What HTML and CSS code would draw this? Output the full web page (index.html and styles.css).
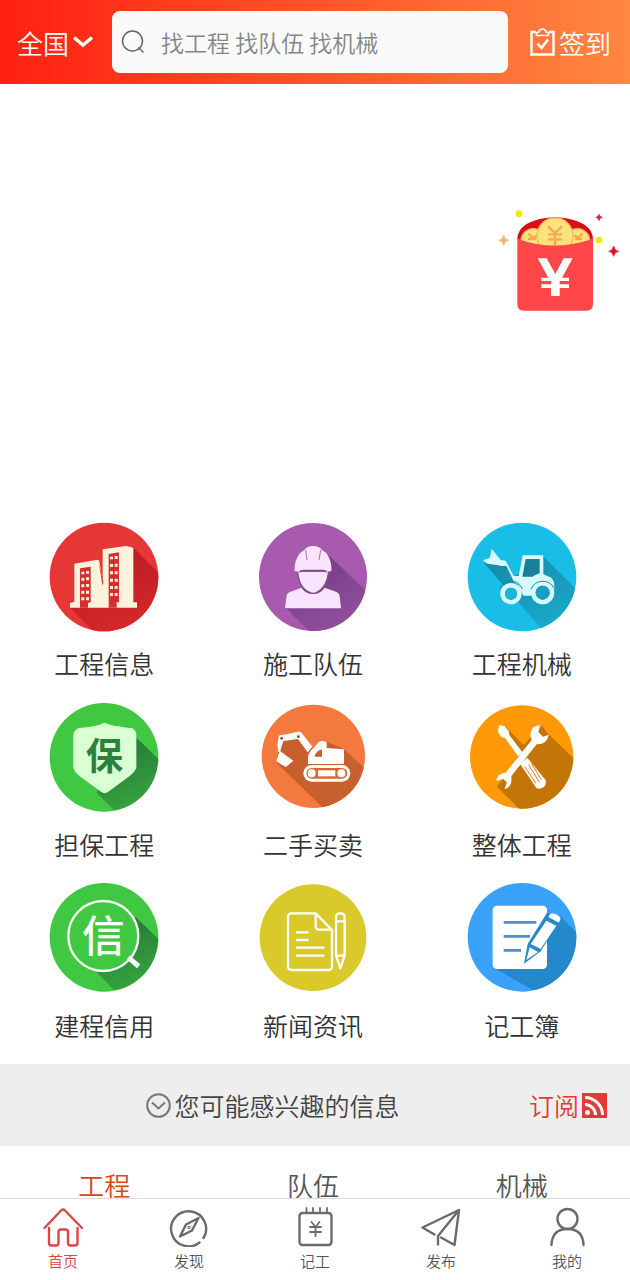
FILE: index.html
```html
<!DOCTYPE html>
<html lang="zh-CN">
<head>
<meta charset="utf-8">
<meta name="viewport" content="width=device-width, initial-scale=1">
<title>首页</title>
<link rel="stylesheet" href="styles.css">
</head>
<body>
<header class="topbar">
  <button class="topbar-button" type="button">全国
    <svg class="chevron" viewBox="0 0 20 12" aria-hidden="true"><path d="M1 1.500 10 9 19 1.500" fill="none" stroke="#fff" stroke-width="3.500"/></svg>
  </button>
  <label class="search">
    <svg class="search-icon" viewBox="0 0 24 24" fill="none" stroke="#666" stroke-width="1.500" aria-hidden="true"><circle cx="11.500" cy="11" r="10"/><path d="M17.500 17.500 22.500 22.500"/></svg>
    <input class="search-input" type="text" placeholder="找工程 找队伍 找机械" aria-label="搜索">
  </label>
  <button class="topbar-button checkin" type="button">
    <svg class="checkin-icon" viewBox="0 0 25 28" fill="none" stroke="#fff" aria-hidden="true"><path d="M6 4H1.500V26.500H23.500V4H19" stroke-width="2.400"/><path d="M6.500 7.500V5.500Q6.500 4 9 4Q9.500 1 12.500 1T16 4Q18.500 4 18.500 5.500V7.500Z" stroke-width="1.600"/><path d="M7.500 15.500 11.500 20 18 11.500" stroke-width="2.600"/></svg>签到
  </button>
</header>

<main>
  <section class="banner" aria-label="活动"></section>

  <nav class="services" aria-label="服务">
    <a class="service" href="#info">
      <svg class="service-icon" viewBox="30 21 324 324" aria-hidden="true">
        <defs><clipPath id="c1"><circle cx="192" cy="186" r="163"/></clipPath><linearGradient id="g1" x1="0" y1="0" x2="0.300" y2="1"><stop offset="0" stop-color="#b51b20"/><stop offset="1" stop-color="#d8292c"/></linearGradient></defs>
        <circle cx="192" cy="186" r="163" fill="#e73636"/>
        <path d="M279 97 400 218V400H210L90 278Z" fill="url(#g1)" clip-path="url(#c1)"/>
        <path d="M90 278V264L103 260V146L172 134L178 137L188 202V103L258 93L280 98V262H291V278Z" fill="#fff2dc"/>
        <path d="M120 160 152 155V262L144 264V278H120ZM206 117 237 112V262H230V278H206ZM176 140 190 200 188 214Z" fill="#d52e31"/>
        <path d="M124 170H133V178H124ZM138 168H147V176H138ZM124 188H133V197H124ZM138 187H147V196H138ZM124 208H133V217H124ZM138 207H147V216H138ZM124 227H133V236H124ZM138 227H147V236H138ZM124 247H133V256H124ZM138 247H147V256H138ZM210 125H219V133H210ZM224 123H233V132H224ZM210 147H219V156H210ZM224 146H233V155H224ZM210 169H219V178H210ZM224 169H233V178H224ZM210 191H219V200H210ZM224 191H233V200H224ZM210 213H219V222H210ZM224 213H233V222H224ZM210 234H219V243H210ZM224 234H233V243H224Z" fill="#fff2dc"/>
      </svg>
      <span class="service-name">工程信息</span>
    </a>
    <a class="service" href="#teams">
      <svg class="service-icon" viewBox="27 21 324 324" aria-hidden="true">
        <defs><clipPath id="c2"><circle cx="189" cy="186" r="162"/></clipPath><linearGradient id="g2" x1="0.200" y1="0" x2="0.700" y2="1"><stop offset="0" stop-color="#713b82"/><stop offset="1" stop-color="#9b54a5"/></linearGradient></defs>
        <circle cx="189" cy="186" r="162" fill="#a85aae"/>
        <path d="M232 117 380 258V400H230L108 280Z" fill="url(#g2)" clip-path="url(#c2)"/>
        <path d="M105 280 110 241Q113 232 122 230L154 218Q168 237 189 237Q211 237 224 218L258 230Q267 233 269 242L273 280Z" fill="#f8e5fd"/>
        <path d="M143 168Q145 218 180 233Q189 237 199 233Q232 217 236 168Z" fill="#f8e5fd" stroke="#7d4b88" stroke-width="4"/>
        <path d="M134 168V154Q139 117 163 105Q170 93 189 93Q208 93 216 105Q240 117 244 154V168L229 171L217 166H161L149 171Z" fill="#f8e5fd"/>
        <path d="M148 170 160 167H218L230 170" fill="none" stroke="#7d4b88" stroke-width="5"/>
        <path d="M167 105 171 135M212 105 207 135" stroke="#a278ad" stroke-width="3"/>
      </svg>
      <span class="service-name">施工队伍</span>
    </a>
    <a class="service" href="#machines">
      <svg class="service-icon" viewBox="38 21 324 324" aria-hidden="true">
        <defs><clipPath id="c3"><circle cx="200" cy="186" r="163"/></clipPath><linearGradient id="g3" x1="0.200" y1="0" x2="0.700" y2="1"><stop offset="0" stop-color="#1989a8"/><stop offset="1" stop-color="#19b4d5"/></linearGradient></defs>
        <circle cx="200" cy="186" r="163" fill="#18bee5"/>
        <path d="M262 122 420 280V400H310L85 143L150 150L171 190Z" fill="url(#g3)" clip-path="url(#c3)"/>
        <path d="M83 136 104 128 109 101 136 135 151 137 175 183H190L202 121H264V178L288 188Q298 198 297 220L294 235H230L226 242H204L190 210L176 201L154 153H139L129 151L96 146Z" fill="#d7fbfc"/>
        <path d="M211 132H253V175L240 180 231 185H201Z" fill="#197f9b"/>
        <g fill="#197f9b" stroke="#d7fbfc"><circle cx="167" cy="236" r="25" stroke-width="14"/><circle cx="262" cy="233" r="28" stroke-width="14"/></g>
        <g fill="none" stroke="#178ead" stroke-width="3"><path d="M133 222A36 36 0 0 1 201 222M227 223A38 38 0 0 1 296 219"/></g>
        <circle cx="167" cy="236" r="18" fill="#18b4d9"/><circle cx="262" cy="233" r="21" fill="#159fc1"/>
      </svg>
      <span class="service-name">工程机械</span>
    </a>
    <a class="service" href="#guarantee">
      <svg class="service-icon" viewBox="30 24 324 324" aria-hidden="true">
        <defs><clipPath id="c4"><circle cx="192" cy="187" r="163"/></clipPath><linearGradient id="g4" x1="0.300" y1="0.200" x2="0.600" y2="1"><stop offset="0" stop-color="#2b803b"/><stop offset="1" stop-color="#39b43e"/></linearGradient></defs>
        <circle cx="192" cy="187" r="163" fill="#41c842"/>
        <path d="M288 127 400 235V400H275L170 293Z" fill="url(#g4)" clip-path="url(#c4)"/>
        <path d="M194 83Q210 92 278 100Q289 108 289 120V218Q285 230 268 244L204 291Q194 298 184 291L122 246Q105 233 100 218V120Q101 105 116 99Q171 94 194 83Z" fill="#daffd3"/>
        <text class="icon-text" x="193" y="225" font-size="112" font-weight="700" text-anchor="middle" fill="#2c803c">保</text>
      </svg>
      <span class="service-name">担保工程</span>
    </a>
    <a class="service" href="#used">
      <svg class="service-icon" viewBox="657 24 324 324" aria-hidden="true">
        <defs><clipPath id="c5"><circle cx="820" cy="184" r="155"/></clipPath></defs>
        <circle cx="820" cy="184" r="155" fill="#f4793e"/>
        <path d="M720 125 777 113 818 160 862 140 912 163 1010 252V400H913L710 204Z" fill="#c75f2e" clip-path="url(#c5)"/>
        <g fill="#fff"><path d="M715 170 712 150 716 125Q719 118 727 120L774 110Q780 109 785 114L817 155L803 172L774 132L730 138L720 170Z"/><path d="M719 167 760 197 738 216Q720 207 709 199Z"/><path d="M804 207V185Q808 166 822 158L836 141Q848 134 860 142V159L912 163V207Z"/></g>
        <path d="M824 185Q828 167 846 163V185Z" fill="#c75f2e"/>
        <rect x="790" y="210" width="141" height="50" rx="25" fill="#fff"/><rect x="799" y="219" width="123" height="32" rx="16" fill="#d96731"/>
        <g fill="#fff"><circle cx="815" cy="235" r="12"/><circle cx="904" cy="235" r="12"/><rect x="834" y="226" width="52" height="18"/></g>
        <g fill="#6b4333"><circle cx="725" cy="130" r="4"/><circle cx="775" cy="125" r="4"/></g>
      </svg>
      <span class="service-name">二手买卖</span>
    </a>
    <a class="service" href="#whole">
      <svg class="service-icon" viewBox="38 24 324 324" aria-hidden="true">
        <defs><clipPath id="c6"><circle cx="199" cy="186" r="155"/></clipPath></defs>
        <circle cx="199" cy="186" r="155" fill="#ff9908"/>
        <path d="M150 94 205 150 260 91 275 113 400 233V400H250L125 275 190 180Z" fill="#c37507" clip-path="url(#c6)"/>
        <path d="M132 90 148 94 160 108 162 120 201 172 188 184 150 130 137 125 127 109Z" fill="#fff"/>
        <path d="M194 206 216 188 270 254Q275 265 266 276Q253 284 243 279Z" fill="#fff"/>
        <path d="M208 215 241 264M220 209 252 262M228 205 258 254" stroke="#d88112" stroke-width="3"/>
        <path d="M255 91Q225 91 225 122L229 135L151 233Q125 235 123 258L144 252L155 263L147 282Q172 278 168 243L244 148Q275 149 280 119L263 125L249 111Z" fill="#fff"/>
      </svg>
      <span class="service-name">整体工程</span>
    </a>
    <a class="service" href="#credit">
      <svg class="service-icon" viewBox="30 27 324 324" aria-hidden="true">
        <defs><clipPath id="c7"><circle cx="192" cy="187" r="163"/></clipPath></defs>
        <circle cx="192" cy="187" r="163" fill="#41c842"/>
        <path d="M288 127 400 235V400H275L165 286Z" fill="url(#g4)" clip-path="url(#c7)"/>
        <circle cx="190" cy="183" r="105" fill="#41c842" stroke="#fff" stroke-width="7"/>
        <path d="M265 247 296 274" stroke="#fff" stroke-width="15"/>
        <text class="icon-text" x="190" y="232" font-size="128" font-weight="500" text-anchor="middle" fill="#fff">信</text>
      </svg>
      <span class="service-name">建程信用</span>
    </a>
    <a class="service" href="#news">
      <svg class="service-icon" viewBox="657 27 324 324" aria-hidden="true">
        <circle cx="819" cy="188" r="160" fill="#d9c92b"/>
        <g fill="none" stroke="#fff" stroke-width="7" stroke-linejoin="round"><path d="M827 115H755Q744 115 744 126V274Q744 285 755 285H865Q876 285 876 274V165Z"/><path d="M827 115V153Q827 164 838 164H876M768 172H806M768 195H806M768 218H853M768 242H853"/><path d="M888 125Q888 115 901 115T914 125V242L901 280L888 242ZM888 139H914M888 242H914"/></g>
      </svg>
      <span class="service-name">新闻资讯</span>
    </a>
    <a class="service" href="#worklog">
      <svg class="service-icon" viewBox="38 27 324 324" aria-hidden="true">
        <defs><clipPath id="c9"><circle cx="200" cy="187" r="163"/></clipPath></defs>
        <circle cx="200" cy="187" r="163" fill="#39a2f8"/>
        <path d="M313 122 400 209V400H330L116 279Z" fill="#2588cb" clip-path="url(#c9)"/>
        <rect x="112" y="92" width="163" height="190" rx="13" fill="#fff"/>
        <path d="M145 142H243M145 184H224M145 226H197" stroke="#508ecb" stroke-width="8"/>
        <path d="M275 113Q288 112 314 137L256 229L206 266L217 207Z" fill="#2588cb"/>
        <path d="M285 116Q305 113 316 130L311 143L279 126Z" fill="#fff"/>
        <path d="M273 137 303 152 256 222 226 207ZM223 217 248 231 213 255Z" fill="#fff"/>
      </svg>
      <span class="service-name">记工簿</span>
    </a>
  </nav>

  <section class="feed">
    <div class="feed-bar">
      <h2 class="feed-title">
        <svg class="feed-icon" viewBox="0 0 25 25" fill="none" stroke="#777" stroke-width="2" aria-hidden="true"><circle cx="12.500" cy="12.500" r="11.300"/><path d="M6 9.500 12.500 15.500 19 9.500"/></svg>您可能感兴趣的信息
      </h2>
      <a class="subscribe" href="#subscribe">订阅
        <svg class="feed-icon" viewBox="0 0 25 25" aria-hidden="true"><path d="M0 0H25V25H0Z" fill="#e53935"/><circle cx="5.500" cy="19.500" r="2.500" fill="#fff"/><path d="M3 11.500A10.500 10.500 0 0 1 13.500 22M3 4.500A17.500 17.500 0 0 1 20.500 22" fill="none" stroke="#fff" stroke-width="3"/></svg>
      </a>
    </div>
    <div class="tabs">
      <button class="tab tab-active" type="button">工程</button>
      <button class="tab" type="button">队伍</button>
      <button class="tab" type="button">机械</button>
    </div>
  </section>
</main>

<a class="red-packet" href="#packet" aria-label="红包">
  <svg class="red-packet-art" viewBox="24 24 375 318" aria-hidden="true">
    <path d="M82 116Q84 79 130 63Q195 40 262 64Q306 80 309 116L260 140H130Z" fill="#d90e18"/>
    <g fill="#ffe27c" stroke="#f6bd60" stroke-width="4"><circle cx="130" cy="123" r="37"/><circle cx="262" cy="123" r="37"/><circle cx="195" cy="108" r="54"/></g>
    <g fill="none" stroke="#f2aa4f" stroke-width="7"><path d="M174 79 195 99 216 79M195 99V136M174 103H216M174 118H216M116 101 130 115 140 106M114 117H138M254 105 262 115 277 101M256 117H276"/></g>
    <path d="M82 116Q190 157 309 116V312Q309 332 289 332H102Q82 332 82 312Z" fill="#ff4648"/>
    <path d="M143 175H170L196 222L221 175H248L216 233H237V243H209V253H237V264H209V288H183V264H154V253H183V243H154V233H175Z" fill="#fff"/>
    <g fill="#eee80d"><circle cx="87" cy="41" r="10"/><circle cx="327" cy="120" r="10"/></g>
    <path d="M41 105Q43 119 57 121Q43 123 41 137Q39 123 26 121Q39 119 41 105Z" fill="#edb66b" stroke="#edb66b" stroke-width="2"/>
    <path d="M327 42Q329 50 338 52Q329 54 327 63Q325 54 317 52Q325 50 327 42Z" fill="#b4324c" stroke="#b4324c" stroke-width="1"/>
    <path d="M371 138Q374 152 386 154Q374 156 371 169Q368 156 356 154Q368 152 371 138Z" fill="#e01020" stroke="#e01020" stroke-width="2"/>
  </svg>
</a>

<nav class="bottom-nav" aria-label="主导航">
  <a class="nav-item nav-active" href="#home">
    <svg class="nav-icon" viewBox="0 0 40 40" aria-hidden="true"><path d="M1.500 21 18 3.500Q20 1.500 22 3.500L39 21M6 21V36Q6 38.500 8.500 38.500H13Q15.500 38.500 15.500 36V25Q15.500 22.500 18 22.500H22.500Q25 22.500 25 25V36Q25 38.500 27.500 38.500H32Q34.500 38.500 34.500 36V21"/></svg>
    首页
  </a>
  <a class="nav-item" href="#discover">
    <svg class="nav-icon" viewBox="0 0 40 40" aria-hidden="true"><path d="M34.500 31A17.500 17.500 0 1 0 30.500 35.500M29.500 11 17 17.500 11 29.500 23 23.500Z"/><circle cx="20" cy="20.500" r="0.500"/></svg>
    发现
  </a>
  <a class="nav-item" href="#log">
    <svg class="nav-icon" viewBox="0 0 40 40" aria-hidden="true"><rect x="4.500" y="6" width="32" height="32" rx="3"/><path d="M11.500 1V6M18 1V6M25 1V6M32 1V6M16.500 15 20.500 20 24.500 15M20.500 20V29M15 20H26M15 25H26" stroke-width="1.800"/></svg>
    记工
  </a>
  <a class="nav-item" href="#publish">
    <svg class="nav-icon" viewBox="0 0 40 40" aria-hidden="true"><path d="M17 37.500V29L38 3 1.500 20.500 13.500 27.500M38 3 33.500 38 20 30.500"/></svg>
    发布
  </a>
  <a class="nav-item" href="#me">
    <svg class="nav-icon" viewBox="0 0 40 40" aria-hidden="true"><circle cx="20.500" cy="12" r="10"/><path d="M4.500 38Q5 22 20.500 22T36.500 38"/></svg>
    我的
  </a>
</nav>
</body>
</html>
```
FILE: styles.css
```css
* {
  box-sizing: border-box;
}

body {
  margin: 0;
  min-height: 100vh;
  background: #fff;
  color: #333;
  font-family: "Noto Sans CJK SC", sans-serif;
  font-size: 25px;
  font-weight: 350;
}

a {
  color: inherit;
  text-decoration: none;
}

button {
  padding: 0;
  border: 0;
  background: none;
  color: inherit;
  font: inherit;
}

svg {
  display: block;
  flex: none;
}

.topbar {
  display: flex;
  align-items: center;
  height: 84px;
  padding: 0 19px 0 17px;
  background: linear-gradient(90deg, #ff2011, #ff8741);
  color: #fff;
}

.topbar-button {
  display: flex;
  align-items: center;
  gap: 4px;
  font-size: 26px;
}

.chevron {
  width: 20px;
  height: 12px;
}

.search {
  display: flex;
  flex: 1;
  align-items: center;
  gap: 16px;
  min-width: 0;
  height: 62px;
  margin: 0 22px 0 19px;
  padding: 0 9px;
  border-radius: 8px;
  background: #fafafa;
}

.search-icon {
  width: 24px;
  height: 24px;
}

.search-input {
  flex: 1;
  min-width: 0;
  padding: 0;
  border: 0;
  outline: 0;
  background: none;
  color: #333;
  font: inherit;
  font-size: 23px;
}

.search-input::placeholder {
  color: #858585;
}

.checkin-icon {
  width: 25px;
  height: 28px;
}

.banner {
  height: 438px;
}

.services {
  display: grid;
  grid-template-columns: repeat(3, 1fr);
  row-gap: 23px;
  padding: 0 4px 22px 0;
}

.service {
  display: flex;
  flex-direction: column;
  align-items: center;
  gap: 16px;
}

.service-icon {
  width: 108px;
  height: 108px;
  overflow: visible;
}

.service-name {
  line-height: 34px;
}

.icon-text {
  font-family: "Noto Sans CJK SC", sans-serif;
}

.feed-bar {
  display: flex;
  align-items: center;
  height: 82px;
  padding: 0 23px 0 17px;
  background: #eee;
}

.feed-title {
  display: flex;
  flex: 1;
  align-items: center;
  justify-content: center;
  gap: 3px;
  margin: 0;
  color: #444;
  font-size: 25px;
  font-weight: inherit;
}

.feed-icon {
  width: 25px;
  height: 25px;
}

.subscribe {
  display: flex;
  align-items: center;
  gap: 3px;
  color: #e53935;
}

.tabs {
  display: grid;
  grid-template-columns: repeat(3, 1fr);
  padding-right: 4px;
}

.tab {
  height: 76px;
  color: #555;
  font-size: 26px;
}

.tab-active {
  color: #d9480f;
}

.red-packet {
  position: fixed;
  top: 208px;
  right: 7px;
}

.red-packet-art {
  width: 125px;
  height: 106px;
}

.bottom-nav {
  position: fixed;
  right: 0;
  bottom: 0;
  left: 0;
  display: grid;
  grid-template-columns: repeat(5, 1fr);
  height: 82px;
  border-top: 1px solid #ddd;
  background: #fff;
}

.nav-item {
  display: flex;
  flex-direction: column;
  align-items: center;
  gap: 3px;
  padding-top: 8px;
  color: #555;
  font-size: 15px;
  line-height: 22px;
}

.nav-icon {
  width: 40px;
  height: 40px;
  fill: none;
  stroke: #6b6b6b;
  stroke-width: 2.4px;
  stroke-linecap: round;
  stroke-linejoin: round;
}

.nav-active {
  color: #e04545;
}

.nav-active .nav-icon {
  stroke: #dc4646;
}
```
